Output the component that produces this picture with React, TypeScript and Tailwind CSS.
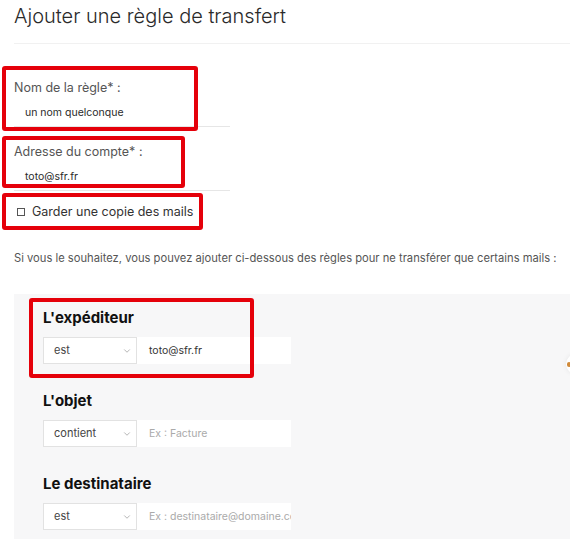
import { ChevronDown } from "lucide-react"

function RedBox({ className }: { className: string }) {
  return <div className={`pointer-events-none absolute rounded-[3px] border-[4px] border-[#e5000a] ${className}`} />
}

function TextField({
  label,
  value,
  className,
  box,
}: {
  label: string
  value: string
  className: string
  box: string
}) {
  return (
    <div className={`relative ml-[14px] w-[216px] ${className}`}>
      <div className="text-[12.5px] leading-[18px] text-[#555]">{label}</div>
      <div className="mt-[3px] flex h-[27px] items-center border-b border-[#e6e6e6] pl-[11px] text-[10.5px] text-[#2a2a2a]">
        {value}
      </div>
      <RedBox className={box} />
    </div>
  )
}

function Rule({
  title,
  op,
  value,
  placeholder,
  children,
}: {
  title: string
  op: string
  value?: string
  placeholder?: string
  children?: React.ReactNode
}) {
  return (
    <div className="relative">
      <div className="text-[15px] font-bold leading-[22px] text-[#111]">{title}</div>
      <div className="mt-[8px] flex">
        <div className="flex h-[27px] w-[94px] items-center justify-between border border-[#e2e2e2] bg-white pl-[10px] pr-[4px] text-[11px] text-[#444]">
          <span>{op}</span>
          <ChevronDown className="h-[10px] w-[10px] text-[#888]" strokeWidth={1.5} />
        </div>
        <div className="flex h-[27px] w-[154px] items-center overflow-hidden whitespace-nowrap bg-white pl-[12px] text-[10.5px]">
          {value ? (
            <span className="text-[#333]">{value}</span>
          ) : (
            <span className="text-[#aaa]">{placeholder}</span>
          )}
        </div>
      </div>
      {children}
    </div>
  )
}

export default function App() {
  return (
    <div className="relative h-[539px] w-[570px] overflow-hidden bg-white font-['Inter','Noto_Sans',sans-serif]">
      {/* Header */}
      <div className="ml-[14px] h-[44px] border-b border-[#f1f1f1] pt-[2px]">
        <h1 className="text-[20px] font-light leading-[28px] text-[#2a2a2a]">Ajouter une règle de transfert</h1>
      </div>

      <TextField
        label="Nom de la règle* :"
        value="un nom quelconque"
        className="mt-[35px]"
        box="left-[-12px] top-[-13px] h-[65px] w-[196px]"
      />
      <TextField
        label="Adresse du compte* :"
        value="toto@sfr.fr"
        className="mt-[16px]"
        box="left-[-12px] top-[-7px] h-[52px] w-[183px]"
      />

      <div className="relative ml-[14px] mt-[12px] flex h-[18px] w-[200px] items-center gap-[7px] pl-[3px] text-[12.5px] text-[#333]">
        <span className="h-[8px] w-[8px] border border-[#555]" />
        <span>Garder une copie des mails</span>
        <RedBox className="left-[-12px] top-[-10px] h-[37px] w-[201px]" />
      </div>

      <p className="ml-[14px] mt-[29px] whitespace-nowrap text-[11.2px] leading-[16px] text-[#555]">
        Si vous le souhaitez, vous pouvez ajouter ci-dessous des règles pour ne transférer que certains mails :
      </p>

      {/* Filters */}
      <div className="ml-[14px] mt-[28px] flex h-[260px] flex-col gap-[26px] bg-[#f7f7f8] pl-[29px] pt-[13px]">
        <Rule title="L'expéditeur" op="est" value="toto@sfr.fr">
          <RedBox className="left-[-14px] top-[-9px] h-[80px] w-[225px]" />
        </Rule>
        <Rule title="L'objet" op="contient" placeholder="Ex : Facture" />
        <Rule title="Le destinataire" op="est" placeholder="Ex : destinataire@domaine.com" />
      </div>

      {/* floating button peeking from the edge */}
      <div className="absolute left-[566px] top-[354px] flex h-[20px] w-[20px] items-center rounded-full bg-white shadow-[0_0_5px_rgba(0,0,0,0.08)]">
        <span className="ml-[1px] h-[5px] w-[4px] rounded-full bg-[#d08a3a]" />
      </div>
    </div>
  )
}
